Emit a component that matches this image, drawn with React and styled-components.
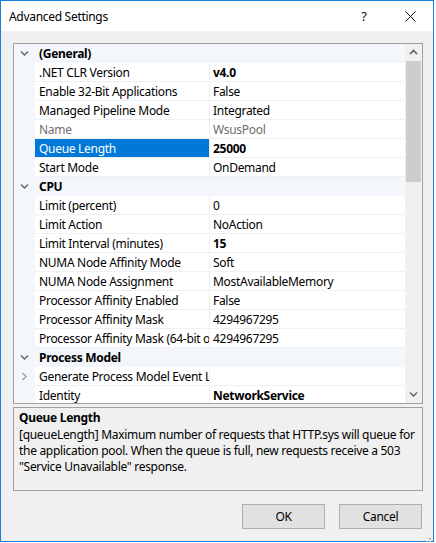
import React from "react";
import styled, { createGlobalStyle } from "styled-components";

const GlobalStyle = createGlobalStyle`
  html, body { margin: 0; padding: 0; background: #ffffff; }
  body { font-family: "Noto Sans", "Open Sans", sans-serif; font-size: 12px; color: #000; letter-spacing: -0.3px; }
  * { box-sizing: border-box; }
`;

const Window = styled.div`
  width: 434px;
  height: 542px;
  border: 1px solid #1a7fd6;
  background: #f0f0f0;
  display: flex;
  flex-direction: column;
`;

const TitleBar = styled.div`
  height: 30px;
  background: #fff;
  display: flex;
  align-items: center;
  padding-left: 8px;
  font-size: 12px;
`;

const Title = styled.div`
  flex: 1;
`;

const TitleButton = styled.div`
  width: 46px;
  height: 30px;
  display: flex;
  align-items: center;
  justify-content: center;
  font-size: 13px;
  color: #111;
`;

const Body = styled.div`
  flex: 1;
  display: flex;
  flex-direction: column;
  padding: 12px 10px 0 12px;
`;

const Grid = styled.div`
  height: 361px;
  border: 1px solid #a0a0a0;
  background: #fff;
  display: flex;
  overflow: hidden;
`;

const List = styled.div`
  flex: 1;
  overflow: hidden;
  display: flex;
  flex-direction: column;
`;

const Row = styled.div`
  height: 19px;
  flex: 0 0 19px;
  display: grid;
  grid-template-columns: 21px 174px 1px 1fr;
  background: ${(p) => (p.$category ? "#f3f6fb" : "#fff")};
  line-height: 19px;
`;

const Gutter = styled.div`
  background: #f3f6fb;
  display: flex;
  align-items: center;
  justify-content: center;
`;

const NameCell = styled.div`
  padding-left: 4px;
  white-space: nowrap;
  overflow: hidden;
  text-overflow: clip;
  border-bottom: ${(p) => (p.$category ? "none" : "1px solid #edf0f5")};
  background: ${(p) => (p.$selected ? "#0078d7" : "transparent")};
  color: ${(p) => (p.$selected ? "#fff" : p.$disabled ? "#6d6d6d" : "#000")};
  font-weight: ${(p) => (p.$category ? 700 : 400)};
`;

const Divider = styled.div`
  background: ${(p) => (p.$category ? "transparent" : "#edf0f5")};
`;

const ValueCell = styled.div`
  padding-left: 3px;
  white-space: nowrap;
  overflow: hidden;
  border-bottom: ${(p) => (p.$category ? "none" : "1px solid #edf0f5")};
  color: ${(p) => (p.$disabled ? "#6d6d6d" : "#000")};
  font-weight: ${(p) => (p.$bold ? 700 : 400)};
`;

const ScrollBar = styled.div`
  width: 17px;
  background: #f0f0f0;
  display: flex;
  flex-direction: column;
`;

const ScrollArrow = styled.div`
  height: 17px;
  display: flex;
  align-items: center;
  justify-content: center;
`;

const ScrollTrack = styled.div`
  flex: 1;
  display: flex;
  flex-direction: column;
`;

const Thumb = styled.div`
  height: 121px;
  margin: 0 1px;
  background: #cdcdcd;
`;

const Description = styled.div`
  margin-top: 3px;
  height: 84px;
  border: 1px solid #a0a0a0;
  padding: 2px 4px 0 5px;
  line-height: 16px;
`;

const DescTitle = styled.div`
  font-weight: 700;
  margin-bottom: 1px;
`;

const DescText = styled.div``;

const Footer = styled.div`
  margin-top: 13px;
  display: flex;
  justify-content: flex-end;
  gap: 14px;
  padding-right: 1px;
  position: relative;
`;

const Button = styled.button`
  width: 83px;
  height: 25px;
  background: #e1e1e1;
  border: 1px solid #adadad;
  font-family: inherit;
  font-size: 12px;
  letter-spacing: -0.3px;
  color: #000;
  padding: 0;
`;

const Grip = styled.div`
  position: absolute;
  right: -9px;
  bottom: -14px;
  width: 9px;
  height: 9px;
`;

const Chevron = ({ dir = "down", color = "#636363" }) => (
  <svg width="9" height="9" viewBox="0 0 9 9">
    {dir === "down" ? (
      <path d="M1 2.5 L4.5 6 L8 2.5" fill="none" stroke={color} strokeWidth="1.4" />
    ) : dir === "up" ? (
      <path d="M1 6 L4.5 2.5 L8 6" fill="none" stroke={color} strokeWidth="1.6" />
    ) : (
      <path d="M2.5 1 L6 4.5 L2.5 8" fill="none" stroke={color} strokeWidth="1.4" />
    )}
  </svg>
);

const rows = [
  { cat: true, name: "(General)" },
  { name: ".NET CLR Version", value: "v4.0", bold: true },
  { name: "Enable 32-Bit Applications", value: "False" },
  { name: "Managed Pipeline Mode", value: "Integrated" },
  { name: "Name", value: "WsusPool", disabled: true },
  { name: "Queue Length", value: "25000", bold: true, selected: true },
  { name: "Start Mode", value: "OnDemand" },
  { cat: true, name: "CPU" },
  { name: "Limit (percent)", value: "0" },
  { name: "Limit Action", value: "NoAction" },
  { name: "Limit Interval (minutes)", value: "15", bold: true },
  { name: "NUMA Node Affinity Mode", value: "Soft" },
  { name: "NUMA Node Assignment", value: "MostAvailableMemory" },
  { name: "Processor Affinity Enabled", value: "False" },
  { name: "Processor Affinity Mask", value: "4294967295" },
  { name: "Processor Affinity Mask (64-bit option)", value: "4294967295" },
  { cat: true, name: "Process Model" },
  { name: "Generate Process Model Event Log Entry", value: "", expand: true },
  { name: "Identity", value: "NetworkService", bold: true },
];

export default function App() {
  return (
    <>
      <GlobalStyle />
      <Window>
        <TitleBar>
          <Title>Advanced Settings</Title>
          <TitleButton>?</TitleButton>
          <TitleButton>
            <svg width="11" height="11" viewBox="0 0 11 11">
              <path d="M0.5 0.5 L10.5 10.5 M10.5 0.5 L0.5 10.5" stroke="#111" strokeWidth="1" />
            </svg>
          </TitleButton>
        </TitleBar>
        <Body>
          <Grid>
            <List>
              {rows.map((r, i) => (
                <Row key={i} $category={r.cat}>
                  <Gutter>
                    {r.cat && <Chevron dir="down" />}
                    {r.expand && <Chevron dir="right" color="#a0a0a0" />}
                  </Gutter>
                  <NameCell
                    $category={r.cat}
                    $selected={r.selected}
                    $disabled={r.disabled}
                  >
                    {r.name}
                  </NameCell>
                  <Divider $category={r.cat} />
                  <ValueCell $category={r.cat} $bold={r.bold} $disabled={r.disabled}>
                    {r.value}
                  </ValueCell>
                </Row>
              ))}
            </List>
            <ScrollBar>
              <ScrollArrow>
                <Chevron dir="up" color="#606060" />
              </ScrollArrow>
              <ScrollTrack>
                <Thumb />
              </ScrollTrack>
              <ScrollArrow>
                <Chevron dir="down" color="#606060" />
              </ScrollArrow>
            </ScrollBar>
          </Grid>
          <Description>
            <DescTitle>Queue Length</DescTitle>
            <DescText>
              [queueLength] Maximum number of requests that HTTP.sys will queue for the
              application pool. When the queue is full, new requests receive a 503
              "Service Unavailable" response.
            </DescText>
          </Description>
          <Footer>
            <Button>OK</Button>
            <Button>Cancel</Button>
            <Grip>
              <svg width="9" height="9" viewBox="0 0 9 9">
                <rect x="6" y="0" width="2" height="2" fill="#b8b8b8" />
                <rect x="3" y="3" width="2" height="2" fill="#b8b8b8" />
                <rect x="6" y="3" width="2" height="2" fill="#b8b8b8" />
                <rect x="0" y="6" width="2" height="2" fill="#b8b8b8" />
                <rect x="3" y="6" width="2" height="2" fill="#b8b8b8" />
                <rect x="6" y="6" width="2" height="2" fill="#b8b8b8" />
              </svg>
            </Grip>
          </Footer>
        </Body>
      </Window>
    </>
  );
}
